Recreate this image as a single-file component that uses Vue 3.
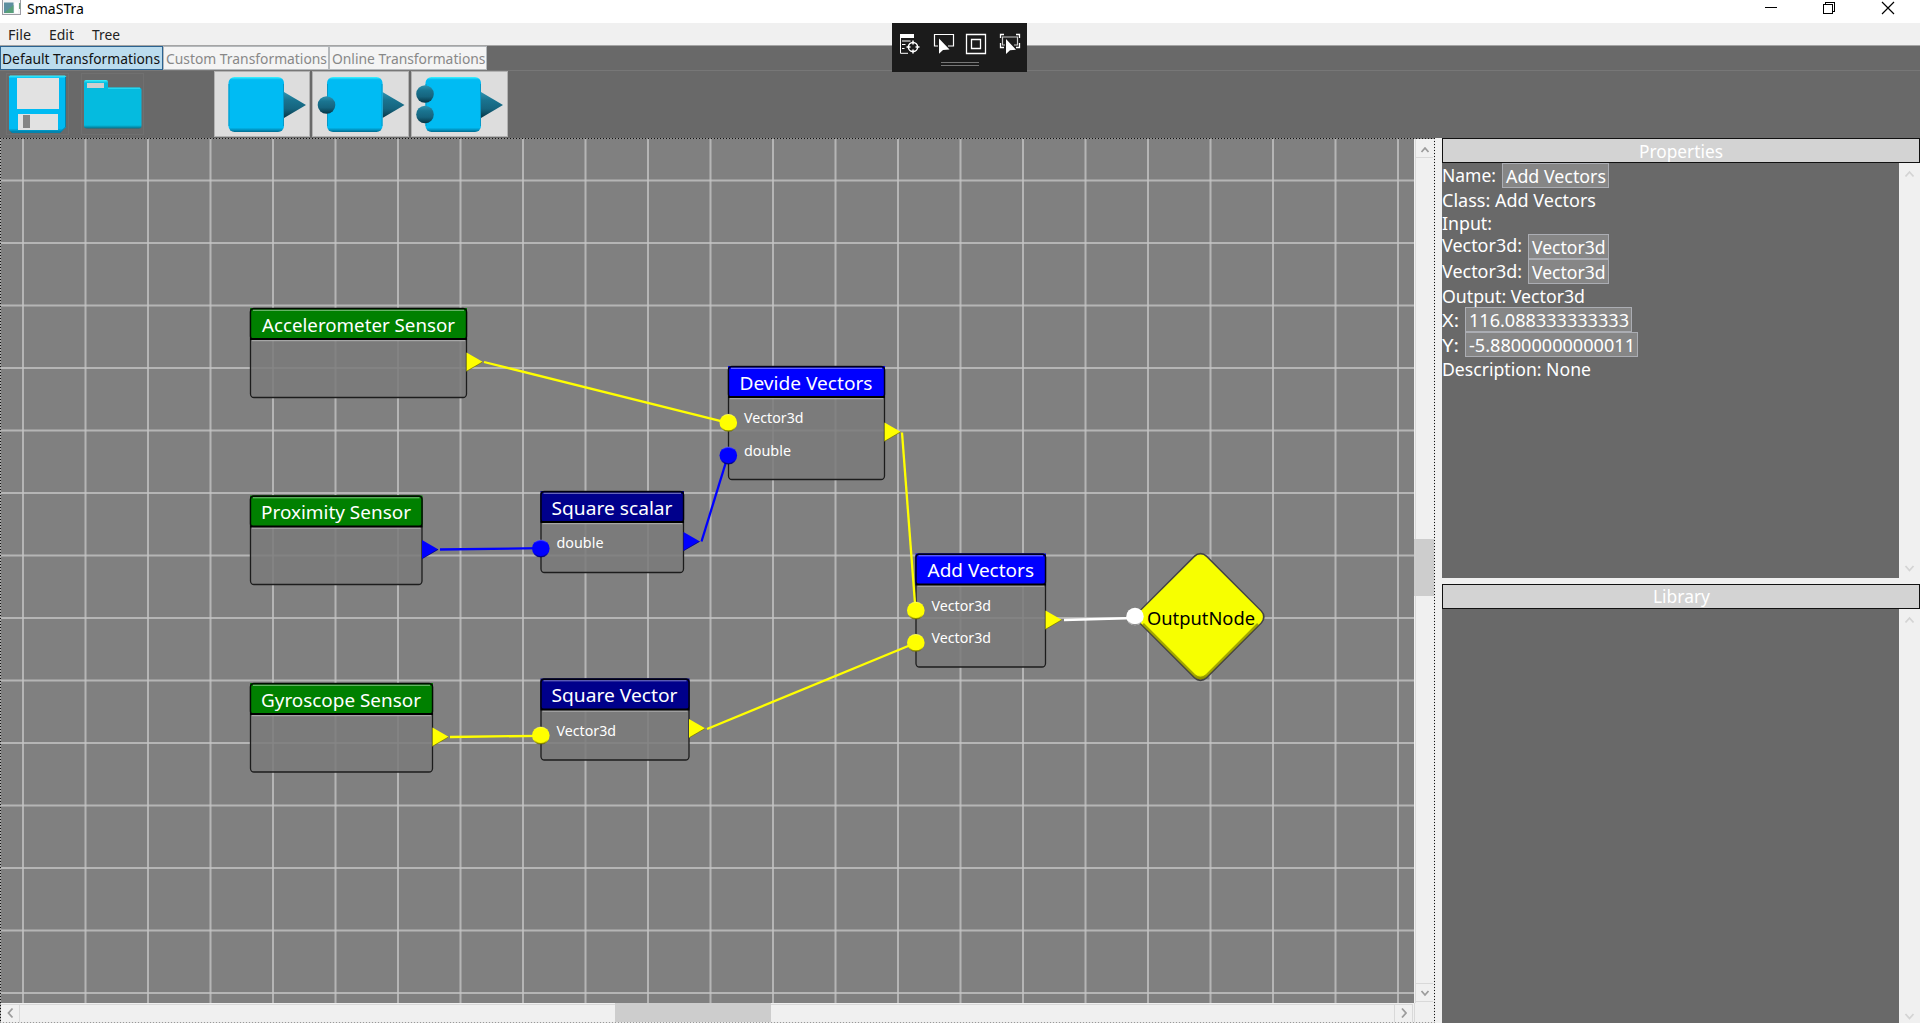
<script setup>
import { h } from 'vue'

// Single line of text set to an exact advance width
const Fit = (p) =>
  h('svg', { width: p.w, height: p.h, style: { display: 'block', overflow: 'visible', flex: 'none' } }, [
    h('text', { x: 0, y: p.b, textLength: p.w, lengthAdjust: 'spacingAndGlyphs', 'font-size': p.s || 18.5, fill: 'currentColor' }, p.t),
  ])
Fit.props = ['t', 'w', 'h', 'b', 's']

const menus = [
  { t: 'File', w: 23 },
  { t: 'Edit', w: 25 },
  { t: 'Tree', w: 28 },
]
const tabs = [
  { t: 'Default Transformations', w: 158, box: 163, active: true },
  { t: 'Custom Transformations', w: 161, box: 166 },
  { t: 'Online Transformations', w: 153.5, box: 158 },
]
const shapes = [
  { inputs: [], dx: 0, w: 96 },
  { inputs: [105], dx: 0.5, w: 97 },
  { inputs: [94, 114.5], dx: 0, w: 97 },
]

const gridX = Array.from({ length: 23 }, (_, i) => 23 + i * 62.5)
const gridY = Array.from({ length: 14 }, (_, i) => 180.5 + i * 62.5)

const Y = '#ffff00'
const B = '#0000ff'
const nodes = [
  { t: 'Accelerometer Sensor', x: 250, y: 308, w: 217, h: 90, head: '#008000', tx: 262, tw: 193, out: [362, Y], ports: [] },
  { t: 'Proximity Sensor', x: 250, y: 495.5, w: 172.5, h: 89.5, head: '#008000', tx: 261, tw: 150, out: [549.5, B], ports: [] },
  { t: 'Gyroscope Sensor', x: 250, y: 683, w: 183, h: 89.5, head: '#008000', tx: 261, tw: 160, out: [737, Y], ports: [] },
  { t: 'Square scalar', x: 540.5, y: 491, w: 143.5, h: 82, head: '#00008b', tx: 551.5, tw: 121, out: [541.5, B], ports: [['double', 548.5, 548, B, 47]] },
  { t: 'Square Vector', x: 540.5, y: 678.5, w: 149, h: 82, head: '#00008b', tx: 551.5, tw: 126, out: [728.5, Y], ports: [['Vector3d', 735.5, 735.7, Y, 59.5]] },
  { t: 'Devide Vectors', x: 728, y: 366, w: 157, h: 114, head: '#0000ff', tx: 739.5, tw: 133, out: [432, Y], ports: [['Vector3d', 422.8, 423, Y, 59.5], ['double', 455.5, 456, B, 47]] },
  { t: 'Add Vectors', x: 915.5, y: 553.5, w: 130.5, h: 114, head: '#0000ff', tx: 927.5, tw: 106.5, out: [620, Y], ports: [['Vector3d', 610.5, 611, Y, 59.5], ['Vector3d', 642.8, 643.2, Y, 59.5]] },
]
const links = [
  [484, 362, 728, 422.8, Y],
  [440, 549.5, 541, 548.2, B],
  [450, 737, 541, 735.8, Y],
  [701.5, 541.5, 728, 455.5, B],
  [707, 729, 915.5, 643, Y],
  [902, 432.5, 915.5, 610, Y],
  [1064, 620, 1135, 618, '#ffffff'],
]

const rows = [
  { t: 'Name:', w: 54, h: 25, b: 19.3, gap: 6, box: 107, v: 'Add Vectors', vw: 100 },
  { t: 'Class: Add Vectors', w: 154, h: 24, b: 19 },
  { t: 'Input:', w: 50, h: 22, b: 18 },
  { t: 'Vector3d:', w: 80, h: 25, b: 18, gap: 6, box: 81, v: 'Vector3d', vw: 73.5 },
  { t: 'Vector3d:', w: 80, h: 25, b: 19, gap: 6, box: 81, v: 'Vector3d', vw: 73.5 },
  { t: 'Output: Vector3d', w: 143, h: 23, b: 18.7 },
  { t: 'X:', w: 17, h: 25, b: 19.7, gap: 6, box: 167, v: '116.088333333333', vw: 160 },
  { t: 'Y:', w: 17, h: 25, b: 19.7, gap: 6, box: 173, v: '-5.88000000000011', vw: 166 },
  { t: 'Description: None', w: 149, h: 25, b: 18.7 },
]
</script>

<template>
  <div class="window">
    <header class="titlebar">
      <svg class="appicon" width="19" height="16" viewBox="0 0 19 16">
        <rect x=".5" y="-1" width="18" height="15.5" fill="#f4f4f6" stroke="#9c9ca4" />
        <rect x="2" y="2.5" width="9.5" height="10.5" fill="#5c8fa0" />
        <path d="M2 13L11.5 5V13Z" fill="#58a07a" />
        <rect x="12.5" y="2.5" width="3.5" height="10.5" fill="#fff" />
        <rect x="17" y="3" width="1.3" height="6" fill="#6fa383" />
      </svg>
      <Fit t="SmaSTra" :w="57" :h="23" :b="14" :s="15" />
      <svg class="controls" width="140" height="16" viewBox="1765 0 140 16" fill="none" stroke="#000" shape-rendering="crispEdges">
        <path d="M1765 7.5h12M1823.5 4.5h9v9h-9zM1825.5 4V2.5h9v9H1833" />
        <path d="M1882 2l12 12M1894 2l-12 12" shape-rendering="auto" stroke-width="1.2" />
      </svg>
    </header>

    <nav class="menubar">
      <Fit v-for="m in menus" :key="m.t" :t="m.t" :w="m.w" :h="22" :b="17" :s="15" />
    </nav>

    <section class="toolbar">
      <div class="tabs">
        <div v-for="t in tabs" :key="t.t" class="tab" :class="{ active: t.active }" :style="{ width: t.box + 'px' }">
          <Fit :t="t.t" :w="t.w" :h="22" :b="17" :s="15" />
        </div>
      </div>
      <div class="tools">
        <svg class="files" width="214" height="67" viewBox="0 71 214 67">
          <defs>
            <linearGradient id="bevel" x1="0" y1="0" x2="0" y2="1">
              <stop offset="0" stop-color="#3ff4ff" /><stop offset=".05" stop-color="#00bbf3" />
              <stop offset=".92" stop-color="#00bbf3" /><stop offset="1" stop-color="#006c90" />
            </linearGradient>
            <linearGradient id="fold" x1="0" y1="0" x2="0" y2="1">
              <stop offset="0" stop-color="#3ff4ff" /><stop offset=".06" stop-color="#05bbdf" />
              <stop offset=".93" stop-color="#05bbdf" /><stop offset="1" stop-color="#04708a" />
            </linearGradient>
          </defs>
          <rect x="6.5" y="73.5" width="62" height="61" fill="none" stroke="#707070" />
          <rect x="81.500" y="73.5" width="62" height="61" fill="none" stroke="#707070" />
          <path d="M10 75.500H65L66 76.500V127L60 133H12L9 130V76.500Z" fill="url(#bevel)" />
          <path d="M65.500 77V127L60 132.500H12" fill="none" stroke="#0583ad" />
          <path d="M17 78h42v31H17zM18 114h40v16H18z" fill="#e2e2e2" />
          <rect x="23" y="115" width="7" height="13" fill="#858585" />
          <path d="M84 82Q84 80 86 80H106Q108 80 108 82V87.500H139Q141.500 87.500 141.500 90V126Q141.500 128.500 139 128.500H87Q84 128.500 84 126Z" fill="url(#fold)" />
          <path d="M108 88.200H140" stroke="#35e3f6" />
          <rect x="87" y="83" width="17" height="5" fill="#cfcfcf" />
        </svg>
        <div class="shapes">
          <div v-for="(s, i) in shapes" :key="i" class="shape" :style="{ width: s.w + 'px' }">
            <svg :width="s.w - 2" height="65" :viewBox="`${215 - s.dx} 72 ${s.w - 2} 65`">
              <defs>
                <linearGradient id="dark" x1="0" y1="0" x2="0" y2="1">
                  <stop offset="0" stop-color="#2e93b0" /><stop offset=".3" stop-color="#1a7490" />
                  <stop offset=".65" stop-color="#15647e" /><stop offset="1" stop-color="#063544" />
                </linearGradient>
              </defs>
              <path d="M284 92L306 105L284 118Z" fill="url(#dark)" />
              <rect x="228.5" y="77" width="55.500" height="55" rx="6" fill="url(#bevel)" />
              <path d="M229 84V126M283.500 84V126" stroke="#0798c6" />
              <circle v-for="c in s.inputs" :key="c" cx="228" :cy="c" r="8.8" fill="url(#dark)" />
            </svg>
          </div>
        </div>
      </div>
    </section>

    <main class="work">
      <div class="pane">
        <div class="upper">
          <svg class="canvas" width="1414" height="865" viewBox="0 138 1414 865">
            <defs>
              <linearGradient id="dia" x1="0" y1="0" x2="1" y2="1">
                <stop offset="0" stop-color="#f7ff00" /><stop offset=".94" stop-color="#f7ff00" /><stop offset="1" stop-color="#6e7000" />
              </linearGradient>
              <linearGradient id="shade" x1="0" y1="0" x2="0" y2="1">
                <stop offset="0" stop-color="#fff" stop-opacity=".25" /><stop offset=".2" stop-color="#fff" stop-opacity="0" />
                <stop offset=".75" stop-color="#000" stop-opacity="0" /><stop offset="1" stop-color="#000" stop-opacity=".5" />
              </linearGradient>
            </defs>
            <g stroke="#c4c4c4" stroke-opacity=".78" stroke-width="2">
              <path v-for="x in gridX" :key="'x' + x" :d="`M${x} 138V1003`" />
              <path v-for="y in gridY" :key="'y' + y" :d="`M0 ${y}H1414`" />
            </g>

            <g v-for="n in nodes" :key="n.t">
              <rect :x="n.x + .5" :y="n.y + 30" :width="n.w - 1" :height="n.h - 30.500" rx="3" fill="#7a7a7a" fill-opacity=".85" />
              <rect :x="n.x + .5" :y="n.y + .5" :width="n.w - 1" :height="n.h - 1" rx="3.500" fill="none" stroke="#1c1c1c" stroke-width="1.3" />
              <rect :x="n.x" :y="n.y" :width="n.w" height="31" :fill="n.head" />
              <rect :x="n.x + .5" :y="n.y + .7" :width="n.w - 1" height="30.500" rx="3" fill="none" stroke="#000" stroke-opacity=".9" stroke-width="1.400" />
              <path :d="`M${n.x + 3} ${n.y + 2.300}H${n.x + n.w - 3}`" stroke="#fff" stroke-opacity=".5" />
              <path :d="`M${n.x} ${n.y + 31}H${n.x + n.w}`" stroke="#000" stroke-width="2" />
              <path :d="`M${n.x + 2} ${n.y + 32.700}H${n.x + n.w - 2}`" stroke="#b0b0b0" />
              <text :x="n.tx" :y="n.y + 23.500" :textLength="n.tw" lengthAdjust="spacingAndGlyphs" font-size="18.800" fill="#fff">{{ n.t }}</text>
              <path :d="`M${n.x + n.w - .5} ${n.out[0] - 9.500}l16.500 9.500l-16.500 9.500z`" :fill="n.out[1]" />
              <path :d="`M${n.x + n.w} ${n.out[0] + 9}l15.500 -9`" stroke="#000" stroke-opacity=".4" />
              <text v-for="(p, i) in n.ports" :key="i" :x="n.x + 16" :y="p[2]" :textLength="p[4]" lengthAdjust="spacingAndGlyphs" font-size="15" fill="#fff">{{ p[0] }}</text>
            </g>

            <rect x="1152.500" y="569" width="96" height="96" rx="9" transform="rotate(45 1200.500 617)" fill="#444" />
            <rect x="1154" y="570.500" width="93" height="93" rx="8" transform="rotate(45 1200.500 617)" fill="url(#dia)" />
            <path d="M1143 624L1194 675Q1200.500 681 1207 675L1258 624" fill="none" stroke="#6b6c00" stroke-opacity=".6" stroke-width="2.500" />

            <path v-for="(l, i) in links" :key="'l' + i" :d="`M${l[0]} ${l[1]}L${l[2]} ${l[3]}`" :stroke="l[4]" stroke-width="2.300" />
            <template v-for="n in nodes" :key="'p' + n.t">
              <g v-for="(p, i) in n.ports" :key="i">
                <circle :cx="n.x + .3" :cy="p[1]" r="8.800" :fill="p[3]" />
                <circle :cx="n.x + .3" :cy="p[1]" r="8.300" fill="none" stroke="url(#shade)" stroke-width="1.500" />
              </g>
            </template>
            <circle cx="1135" cy="616.500" r="8.700" fill="#fff" />
            <circle cx="1135" cy="616.500" r="8.200" fill="none" stroke="url(#shade)" />
            <text x="1147" y="624.800" textLength="108" lengthAdjust="spacingAndGlyphs" font-size="18.800" fill="#000">OutputNode</text>
          </svg>
          <svg class="vbar" width="21" height="865" viewBox="1414 138 21 865">
            <rect x="1414" y="138" width="21" height="865" fill="#f0f0f0" />
            <path d="M1415.500 138V1003M1415 157.500H1433M1415 983.500H1433M1415 1001.500H1433" stroke="#d9d9d9" fill="none" />
            <rect x="1414" y="539" width="20" height="57" fill="#cdcdcd" />
            <path d="M1421.500 152l3.500-4 3.500 4M1421.500 991l3.500 4 3.500-4" fill="none" stroke="#9c9c9c" stroke-width="1.800" />
          </svg>
        </div>
        <svg class="hbar" width="1435" height="20" viewBox="0 1003 1435 20">
          <rect y="1003" width="1435" height="20" fill="#f0f0f0" />
          <path d="M1 1004.500H1413M19.500 1004V1022M1394.500 1004V1022M1412.500 1004V1022M1414.500 1003V1022" stroke="#d9d9d9" fill="none" />
          <rect x="615" y="1003" width="156" height="19" fill="#cdcdcd" />
          <path d="M12.500 1008.500l-4 4.500 4 4.500M1402 1008.500l4 4.500-4 4.500" fill="none" stroke="#9c9c9c" stroke-width="1.800" />
        </svg>
      </div>

      <div class="splitter"></div>

      <aside class="side">
        <h2 class="head"><Fit t="Properties" :w="84" :h="23" :b="18.5" /></h2>
        <div class="panel props">
          <div class="content">
            <div v-for="(r, i) in rows" :key="i" class="row" :style="{ height: r.h + 'px', gap: r.gap + 'px' }">
              <Fit :t="r.t" :w="r.w" :h="r.h" :b="r.b" />
              <div v-if="r.v" class="field" :style="{ width: r.box + 'px' }">
                <Fit :t="r.v" :w="r.vw" :h="23" :b="18.7" />
              </div>
            </div>
          </div>
          <div class="scroll">
            <svg width="21" height="20"><path d="M6.500 13.500l4-4.500 4 4.500" /></svg>
            <svg width="21" height="20"><path d="M6.500 8l4 4.500 4-4.500" /></svg>
          </div>
        </div>
        <div class="hsplit"></div>
        <h2 class="head"><Fit t="Library" :w="57" :h="23" :b="18.3" /></h2>
        <div class="panel library">
          <div class="content"></div>
          <div class="scroll">
            <svg width="21" height="20"><path d="M6.500 13.500l4-4.500 4 4.500" /></svg>
            <svg width="21" height="20"><path d="M6.500 11l4 4.500 4-4.500" /></svg>
          </div>
        </div>
      </aside>
    </main>

    <div class="inspector">
      <svg width="135" height="49" viewBox="892 23 135 49" fill="none" stroke="#fff">
        <path d="M900 34h14v4h-14z" fill="#fff" stroke="none" />
        <path d="M900.500 38V53.300H908M902 41h8.500M902 44.500h3.500M902 48.500h2.500" />
        <circle cx="913" cy="47" r="4.600" stroke-width="1.500" />
        <path d="M913 40.500v4M913 49.500v4M906.500 47h4M915.500 47h4" stroke-width="1.500" />
        <path d="M938 46H934.500V34.500H953.500V46H948" stroke-width="1.200" />
        <path d="M939 38.500V53.800L943 50L949.500 49.500Z" fill="#fff" stroke="none" />
        <path d="M966.500 34.500h19v19h-19zM971.500 39.500h9v9h-9z" stroke-width="1.300" />
        <path d="M1000.500 38V34.500H1004M1016 34.500H1019.500V38M1019.500 43V47.500H1016M1004 47.500H1000.500V43" stroke-width="1.300" />
        <path d="M1005 45H1002.500V37H1017.500V45H1014" stroke="#ccc" stroke-width="1.200" />
        <path d="M1006 39V54L1010 50.200L1016 49.700Z" fill="#fff" stroke="none" />
        <path d="M941 62.500h38M941 65.500h38" stroke="#777" />
      </svg>
    </div>
  </div>
</template>

<style>
body { margin: 0; overflow: hidden; }
</style>

<style scoped>
.window {
  position: relative;
  width: 1920px;
  height: 1023px;
  display: flex;
  flex-direction: column;
  overflow: hidden;
  background: #f0f0f0;
  font-family: "Noto Sans", "Open Sans", sans-serif;
}
svg { display: block; flex: none; }
.titlebar { height: 23px; display: flex; background: #fff; color: #000; padding-left: 2px; }
.appicon { margin-right: 6px; }
.controls { margin-left: auto; margin-right: 15px; }
.menubar { height: 22px; display: flex; gap: 18px; padding-left: 8px; background: #f0f0f0; color: #222; border-bottom: 1px solid #a5a5a5; }
.toolbar { height: 92px; background: #696969; display: flex; flex-direction: column; }
.tabs { height: 24px; display: flex; border-bottom: 1px solid #777; }
.tab { box-sizing: border-box; height: 24px; border: 1px solid #b4b8bb; background: #f4f4f4; color: #888; padding-left: 1.5px; }
.tab.active { background: #bbdcee; border-color: #2c6390; color: #111; padding-left: 1px; }
.tools { height: 67px; display: flex; }
.shapes { display: flex; gap: 2px; }
.shape { box-sizing: border-box; height: 66px; border: 1px solid #b2b2b2; background: #dddddd; overflow: hidden; }
.work { flex: 1; display: flex; min-height: 0; }
.pane { position: relative; width: 1435px; display: flex; flex-direction: column; }
.pane::after {
  content: "";
  position: absolute;
  inset: 0;
  pointer-events: none;
  background:
    repeating-linear-gradient(90deg, #111 0 1px, #8a8a8a 1px 3px) 0 0 / 100% 1px no-repeat,
    repeating-linear-gradient(90deg, #999 0 1px, #e4e4e4 1px 3px) 0 100% / 100% 1px no-repeat,
    repeating-linear-gradient(180deg, #111 0 1px, #aaa 1px 3px) 0 0 / 1px 100% no-repeat,
    repeating-linear-gradient(180deg, #111 0 1px, #ddd 1px 3px) 100% 0 / 1px 100% no-repeat;
}
.upper { display: flex; height: 865px; }
.canvas { background: #808080; }
.splitter { width: 7px; background: #f0f0f0; }
.side { width: 478px; display: flex; flex-direction: column; }
.head { margin: 0; box-sizing: border-box; height: 25px; border: 1px solid #111; background: #d3d3d3; color: #fff; display: flex; justify-content: center; font-weight: 400; }
.panel { display: flex; background: #696969; color: #fff; }
.props { height: 415px; }
.library { flex: 1; }
.content { flex: 1; }
.row { display: flex; }
.field { box-sizing: border-box; height: 25px; border: 1px solid #abadb3; background: #868686; display: flex; justify-content: center; }
.scroll { width: 21px; background: #f0f0f0; display: flex; flex-direction: column; justify-content: space-between; }
.scroll path { fill: none; stroke: #d4d4d4; stroke-width: 1.8; }
.hsplit { height: 6px; background: #f0f0f0; }
.inspector { position: absolute; left: 892px; top: 23px; width: 135px; height: 49px; background: #1b1b1b; }
</style>
